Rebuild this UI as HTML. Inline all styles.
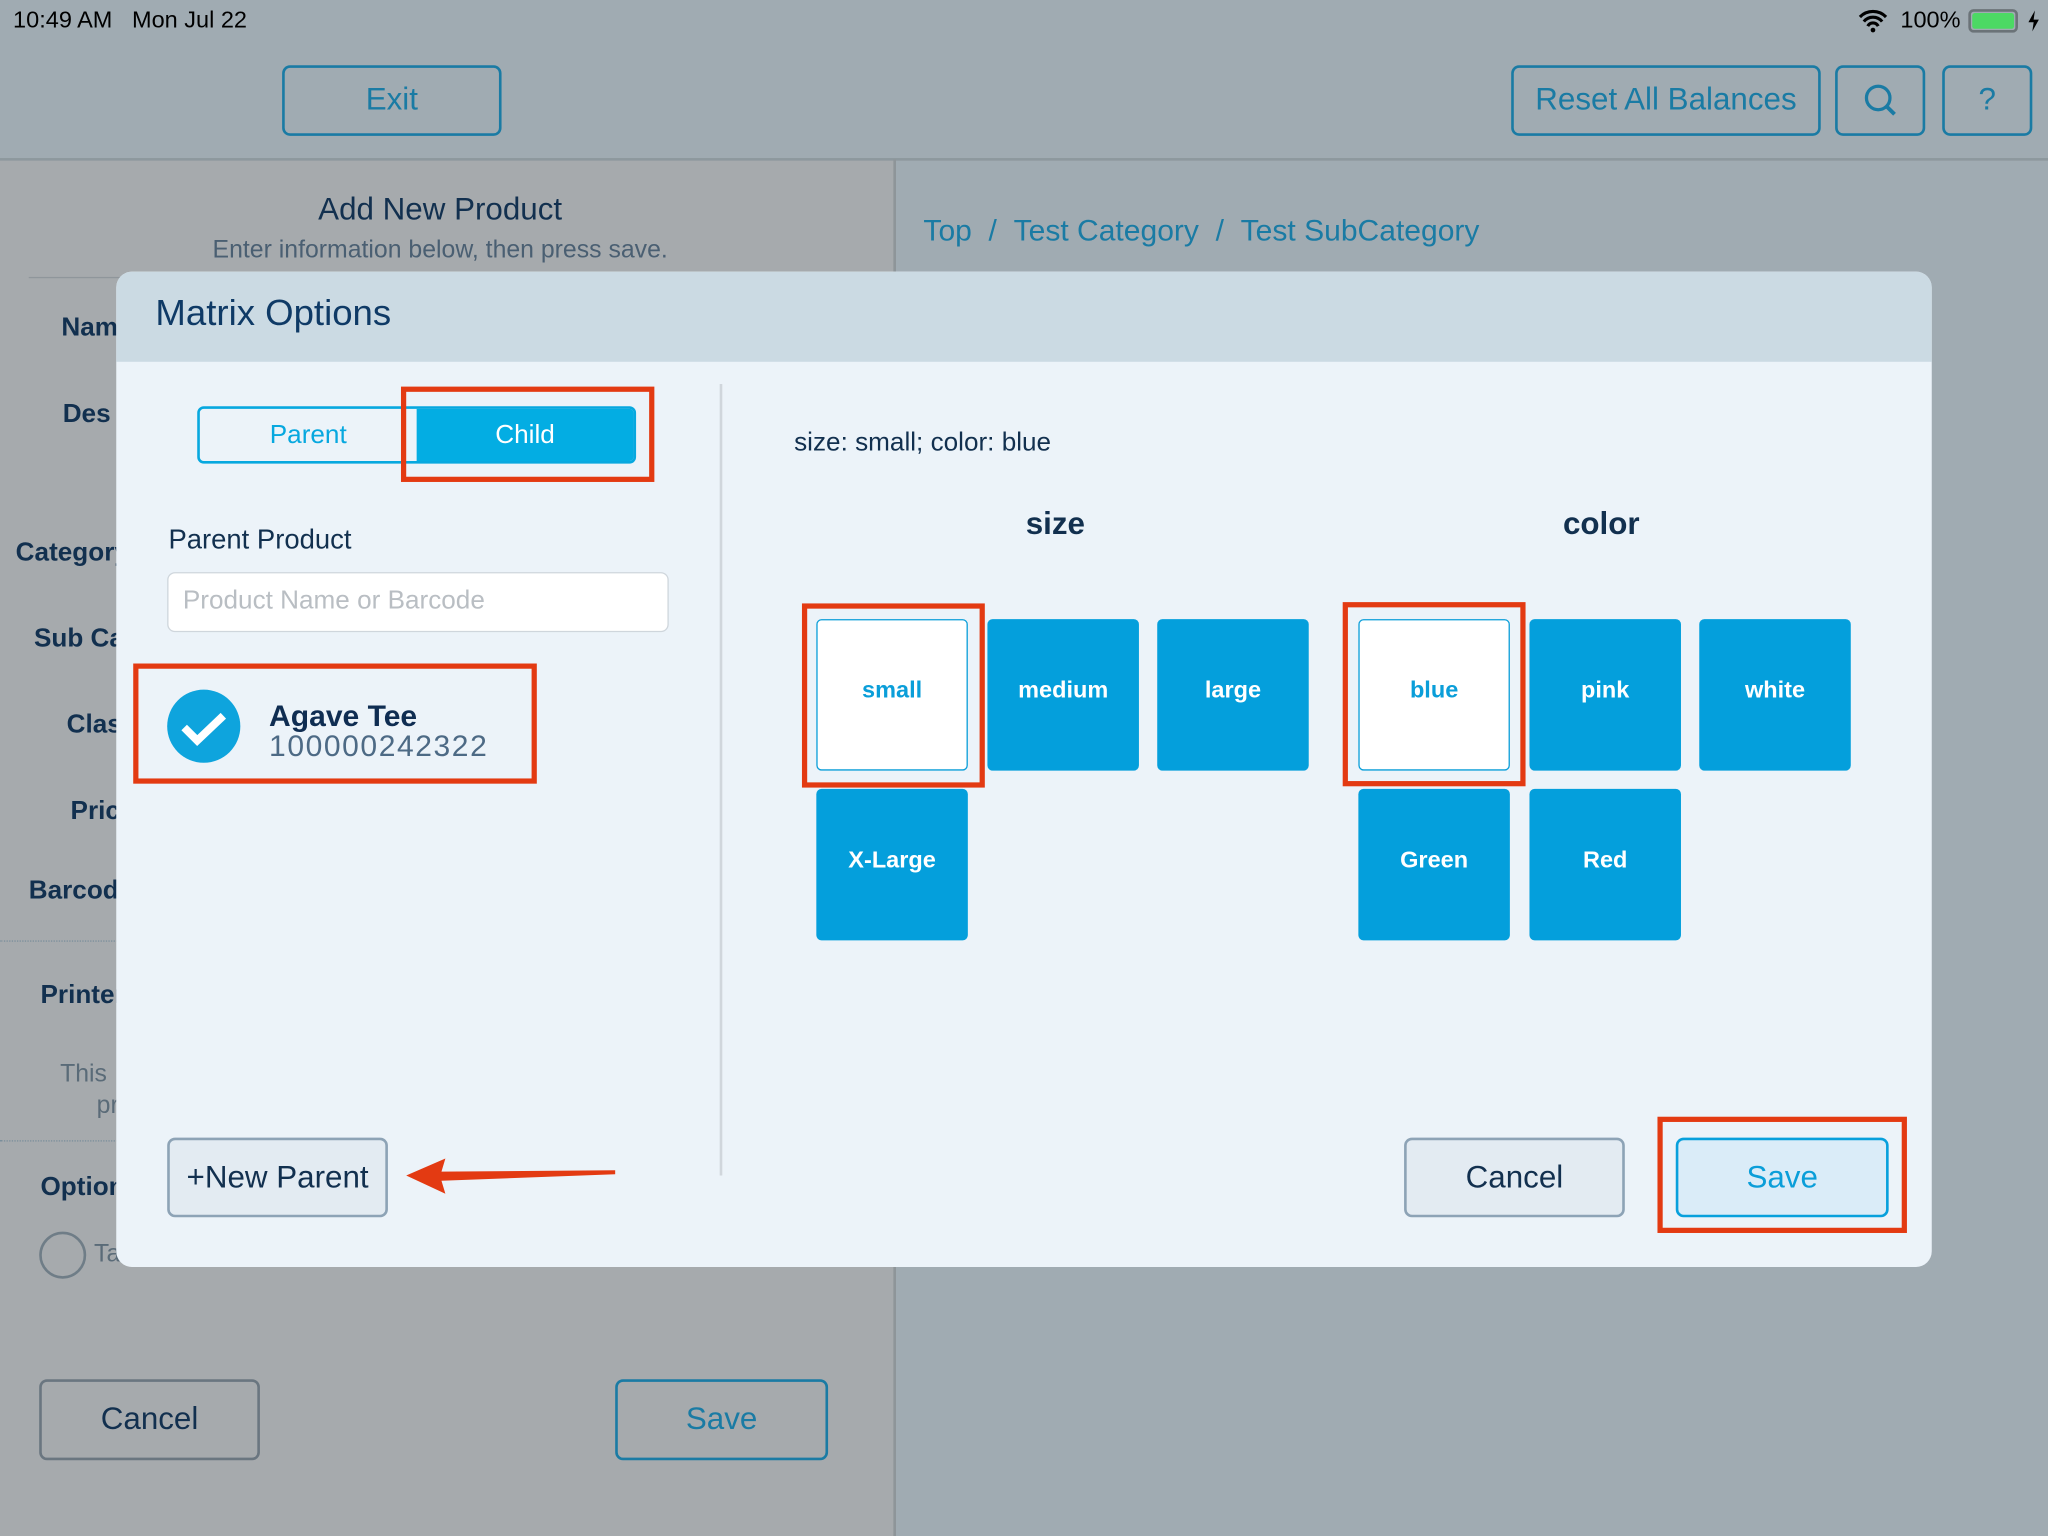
<!DOCTYPE html>
<html><head><meta charset="utf-8"><style>
*{margin:0;padding:0;box-sizing:border-box}
html,body{width:2048px;height:1536px;overflow:hidden;background:#a0abb1}
#s{position:absolute;left:0;top:0;width:1568px;height:1176px;transform:scale(1.306122);transform-origin:0 0;font-family:"Liberation Sans",sans-serif;background:#a0abb2}
.a{position:absolute}
.ob{position:absolute;border:2px solid #1a7ba4;border-radius:6px;color:#1a7ba4;font-size:24px;display:flex;align-items:center;justify-content:center}
.lbl{position:absolute;font-weight:bold;color:#12304f;font-size:20px}
.t{position:absolute;width:116px;height:116px;background:#049fdc;border-radius:4px;color:#fff;font-weight:bold;font-size:18px;display:flex;align-items:center;justify-content:center;padding-bottom:8px}
.t.w{background:#fff;color:#0a9ed9;border:1px solid #0a9ed9}
.r{position:absolute;border:4px solid #e33a12}
</style></head><body><div id="s">
<div class="a" style="left:0;top:122px;width:685px;height:1054px;background:#a6aaad"></div>
<div class="a" style="left:0;top:121px;width:1568px;height:2px;background:#8d989e"></div>
<div class="a" style="left:684px;top:122px;width:2px;height:1054px;background:#8e9599"></div>
<div class="a" style="left:10px;top:5px;font-size:18px;color:#000">10:49 AM&nbsp;&nbsp;&nbsp;Mon Jul 22</div>
<div class="a" style="left:1455px;top:5px;font-size:18px;color:#000">100%</div>
<svg class="a" style="left:1422px;top:7px" width="24" height="18" viewBox="0 0 24 18"><path d="M2 6a14 14 0 0 1 20 0M5 9.5a9 9 0 0 1 14 0M8 13a4.5 4.5 0 0 1 8 0" stroke="#000" stroke-width="2.4" fill="none"/><circle cx="12" cy="16" r="1.8"/></svg>
<div class="a" style="left:1507px;top:7px;width:38px;height:18px;border:2px solid #6b7378;border-radius:4px;padding:1px"><div style="width:100%;height:100%;background:#4cd964;border-radius:2px"></div></div>
<svg class="a" style="left:1552px;top:7px" width="10" height="18" viewBox="0 0 10 18"><path d="M6 1L1 10h4l-1 7 5-9H5z" fill="#000"/></svg>
<div class="ob" style="left:216px;top:50px;width:168px;height:54px">Exit</div>
<div class="ob" style="left:1157px;top:50px;width:237px;height:54px">Reset All Balances</div>
<div class="ob" style="left:1405px;top:50px;width:69px;height:54px"><svg width="30" height="30" viewBox="0 0 30 30"><circle cx="13" cy="13" r="9" stroke="#1a7ba4" stroke-width="2.5" fill="none"/><path d="M19.5 19.5l6 6" stroke="#1a7ba4" stroke-width="3"/></svg></div>
<div class="ob" style="left:1487px;top:50px;width:69px;height:54px">?</div>
<div class="a" style="left:0;top:147px;width:674px;text-align:center;font-size:24px;color:#12304f">Add New Product</div>
<div class="a" style="left:0;top:181px;width:674px;text-align:center;font-size:19px;color:#4a5f72">Enter information below, then press save.</div>
<div class="a" style="left:22px;top:212px;width:663px;height:1px;background:#8f969b"></div>
<div class="lbl" style="left:47px;top:240px">Name</div>
<div class="lbl" style="left:48px;top:306px">Des</div>
<div class="lbl" style="left:12px;top:412px">Category</div>
<div class="lbl" style="left:26px;top:478px">Sub Cat</div>
<div class="lbl" style="left:51px;top:544px">Class</div>
<div class="lbl" style="left:54px;top:610px">Price</div>
<div class="lbl" style="left:22px;top:671px">Barcode</div>
<div class="a" style="left:0;top:720px;width:100px;height:1px;border-top:1px dotted #7a8e9b"></div>
<div class="lbl" style="left:31px;top:751px">Printer</div>
<div class="a" style="left:46px;top:812px;font-size:19px;color:#5a6b78">This</div>
<div class="a" style="left:74px;top:836px;font-size:19px;color:#5a6b78">pr</div>
<div class="a" style="left:0;top:873px;width:100px;height:1px;border-top:1px dotted #7a8e9b"></div>
<div class="lbl" style="left:31px;top:898px">Options</div>
<div class="a" style="left:30px;top:943px;width:36px;height:36px;border:2px solid #6f7d87;border-radius:50%"></div>
<div class="a" style="left:72px;top:950px;font-size:19px;color:#5a6b78">Ta</div>
<div class="ob" style="left:30px;top:1056px;width:169px;height:62px;border-color:#6a7680;color:#12304f">Cancel</div>
<div class="ob" style="left:471px;top:1056px;width:163px;height:62px">Save</div>
<div class="a" style="left:707px;top:163px;font-size:23px;color:#1a7ba4;word-spacing:0px">Top &nbsp;/ &nbsp;Test Category &nbsp;/ &nbsp;Test SubCategory</div>

<div class="a" style="left:89px;top:208px;width:1390px;height:762px;background:#ecf3f9;border-radius:12px;overflow:hidden">
<div style="height:69px;background:#cbdae3;padding:16px 0 0 30px;font-size:28px;color:#0f3a66">Matrix Options</div>
</div>
<div class="a" style="left:551px;top:294px;width:2px;height:606px;background:#d0d6dc"></div>
<div class="a" style="left:151px;top:311px;width:336px;height:44px;border:2px solid #07a8df;border-radius:5px;overflow:hidden;display:flex;font-size:20px">
<div style="flex:1;display:flex;align-items:center;justify-content:center;color:#07a8df">Parent</div>
<div style="flex:1;display:flex;align-items:center;justify-content:center;background:#03ade3;color:#fff">Child</div></div>
<div class="r" style="left:307px;top:296px;width:194px;height:73px"></div>
<div class="a" style="left:129px;top:402px;font-size:21px;color:#12304f">Parent Product</div>
<div class="a" style="left:128px;top:438px;width:384px;height:46px;background:#fff;border:1px solid #cfd6dc;border-radius:6px;padding:10px 11px;font-size:20px;color:#b9bec3">Product Name or Barcode</div>
<div class="r" style="left:102px;top:508px;width:309px;height:92px"></div>
<div class="a" style="left:128px;top:528px;width:56px;height:56px;border-radius:50%;background:#0ea4dd"><svg width="56" height="56"><path d="M13 29l10 10 20-19" stroke="#fff" stroke-width="6" fill="none"/></svg></div>
<div class="a" style="left:206px;top:535px;font-size:23px;font-weight:bold;color:#0f2d52">Agave Tee</div>
<div class="a" style="left:206px;top:558px;font-size:23px;color:#4d6a85;letter-spacing:1.2px">100000242322</div>
<div class="a" style="left:128px;top:871px;width:169px;height:61px;border:2px solid #8da3b6;border-radius:6px;background:#e3ebf2;display:flex;align-items:center;justify-content:center;font-size:24px;color:#12304f">+New Parent</div>
<svg class="a" style="left:305px;top:880px" width="170" height="40"><path d="M6 20L36 7L33 17L166 16L166 19L33 24L36 34Z" fill="#e33a12"/></svg>
<div class="a" style="left:608px;top:328px;font-size:20px;color:#12304f">size: small; color: blue</div>
<div class="a" style="left:742px;top:388px;width:132px;text-align:center;font-size:24px;font-weight:bold;color:#12304f">size</div>
<div class="a" style="left:1160px;top:388px;width:132px;text-align:center;font-size:24px;font-weight:bold;color:#12304f">color</div>
<div class="t w" style="left:625px;top:474px">small</div>
<div class="t" style="left:756px;top:474px">medium</div>
<div class="t" style="left:886px;top:474px">large</div>
<div class="t" style="left:625px;top:604px">X-Large</div>
<div class="t w" style="left:1040px;top:474px">blue</div>
<div class="t" style="left:1171px;top:474px">pink</div>
<div class="t" style="left:1301px;top:474px">white</div>
<div class="t" style="left:1040px;top:604px">Green</div>
<div class="t" style="left:1171px;top:604px">Red</div>
<div class="r" style="left:614px;top:462px;width:140px;height:141px"></div>
<div class="r" style="left:1028px;top:461px;width:140px;height:141px"></div>
<div class="a" style="left:1075px;top:871px;width:169px;height:61px;border:2px solid #8da3b6;border-radius:6px;background:#e3ebf2;display:flex;align-items:center;justify-content:center;font-size:24px;color:#12304f">Cancel</div>
<div class="a" style="left:1283px;top:871px;width:163px;height:61px;border:2px solid #07a0dc;border-radius:6px;background:#daecf8;display:flex;align-items:center;justify-content:center;font-size:24px;color:#0a9ed9">Save</div>
<div class="r" style="left:1269px;top:855px;width:191px;height:89px"></div>
</div></body></html>
